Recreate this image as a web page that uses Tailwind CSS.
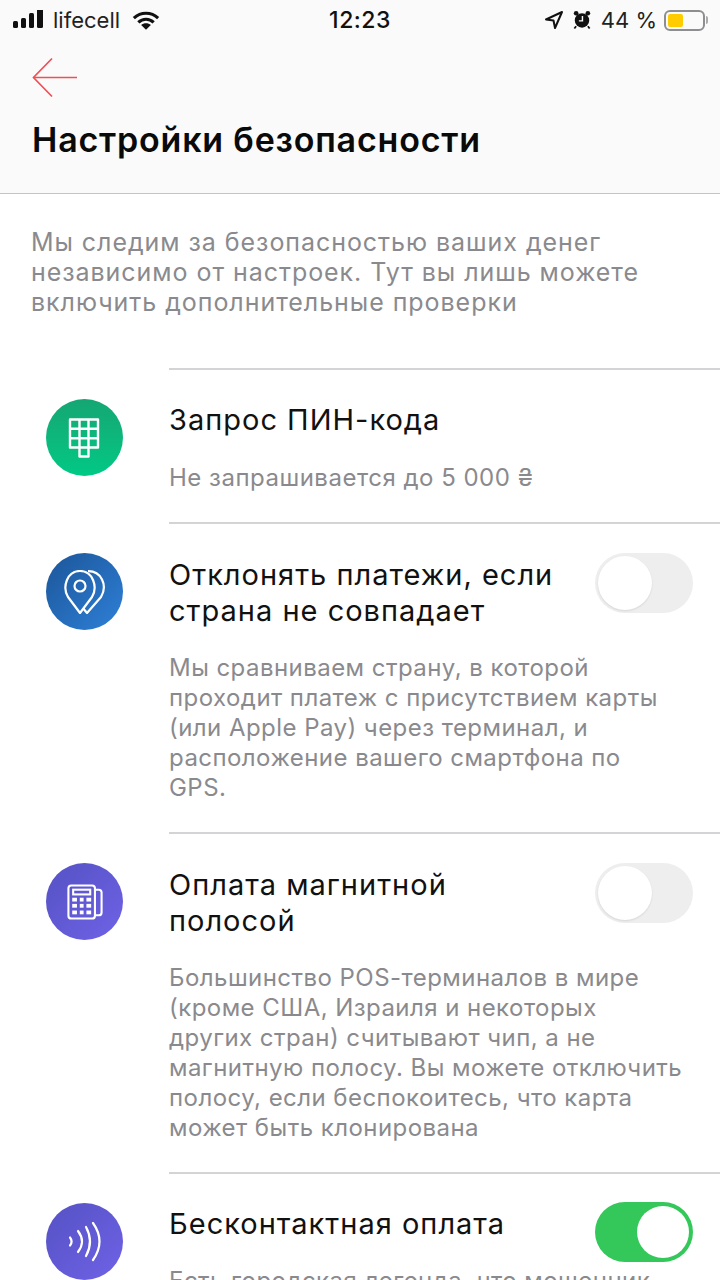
<!DOCTYPE html>
<html lang="ru">
<head>
  <meta charset="UTF-8">
  <title>Настройки безопасности</title>
  <script src="https://cdn.jsdelivr.net/npm/@tailwindcss/browser@4"></script>
</head>
<body class="bg-white">
  <div class="w-[720px] h-[1280px] overflow-hidden font-['Inter','Noto_Sans',sans-serif]">
    <!-- Header -->
    <header class="h-[194px] bg-[#fafafa] border-b border-[#c4c4c6]">
      <div class="h-[40px] flex items-center justify-between pl-[12px] pr-[12px] text-[#111]">
        <div class="flex items-center w-[260px]">
          <svg width="33" height="20" viewBox="0 1 33 20" fill="#111"><rect x="1" y="12" width="5" height="7" rx="1.5"/><rect x="9" y="9" width="5" height="10" rx="1.5"/><rect x="17" y="4" width="5" height="15" rx="1.5"/><rect x="25" y="0" width="6" height="19" rx="1.5"/></svg>
          <span class="text-[22px] ml-[8px] leading-none text-[#222]">lifecell</span>
          <svg class="ml-[12px]" width="28" height="21" viewBox="0 0 30 22" fill="none" stroke="#111" stroke-width="3.4"><path d="M2 8.500C9.500 1.500 20.500 1.500 28 8.500"/><path d="M6.800 13C11.500 8.500 18.500 8.500 23.200 13"/><path fill="#111" stroke="none" d="M15 21l-5.200-5.300C12.500 13.400 17.500 13.400 20.200 15.700z"/></svg>
        </div>
        <span class="text-[23px] font-medium leading-none text-[#111] tracking-[0.5px]">12:23</span>
        <div class="flex items-center justify-end w-[260px]">
          <svg width="20" height="22" viewBox="0 0 20 22" fill="none" stroke="#111" stroke-width="2" stroke-linejoin="round"><path d="M2 10.500L18 3l-7 16-1.500-7.500z"/></svg>
          <svg class="ml-[9px]" width="18" height="20" viewBox="0 0 20 22"><circle cx="10" cy="11.500" r="8" fill="#111"/><circle cx="3.500" cy="3.500" r="2.600" fill="#111"/><circle cx="16.500" cy="3.500" r="2.600" fill="#111"/><path d="M3.500 18l-2 2.500M16.500 18l2 2.500" stroke="#111" stroke-width="2"/><path d="M10.500 6.500V12H6.500" stroke="#fafafa" stroke-width="1.600" fill="none"/></svg>
          <span class="text-[22px] ml-[10px] leading-none text-[#222]">44 %</span>
          <div class="ml-[7px] w-[41px] h-[21px] rounded-[6px] border-2 border-[#8e8e90] p-[2px] flex">
            <div class="w-[15px] bg-[#ffcc00] rounded-[2px]"></div>
          </div>
          <div class="ml-[1px] w-[2px] h-[8px] bg-[#aaa] rounded-r-sm"></div>
        </div>
      </div>
      <div class="pl-[32px] pt-[17px]">
        <svg width="46" height="42" viewBox="0 0 46 42" fill="none" stroke="#ef4f57" stroke-width="1.700"><path d="M45 20.500H2"/><path d="M20 1.500L1.500 20.500 20 39.500"/></svg>
      </div>
      <h1 class="pl-[32px] mt-[19px] text-[34px] leading-[44px] font-semibold text-[#0a0a0a] tracking-[0.8px]">Настройки безопасности</h1>
    </header>

    <!-- Intro -->
    <p class="pl-[31px] pt-[33px] text-[25px] leading-[30px] text-[#8a8a8e] tracking-[0.95px]">Мы следим за безопасностью ваших денег<br>независимо от настроек. Тут вы лишь можете<br>включить дополнительные проверки</p>

    <!-- Rows -->
    <div class="mt-[51px]">
      <div class="flex">
        <div class="w-[169px] shrink-0 pl-[46px] pt-[31px]">
          <div class="w-[77px] h-[77px] rounded-full bg-linear-to-b from-[#14a673] to-[#00c985] flex items-center justify-center">
            <svg class="-ml-[1px]" width="34" height="40" viewBox="0 0 34 40" fill="none" stroke="#fff" stroke-width="2.400" stroke-linejoin="round"><path d="M3 1.500h28v28H3zM12.500 1.500v28M21.500 1.500v28M3 10.800h28M3 20.200h28M12.500 29.500v9h9v-9"/></svg>
          </div>
        </div>
        <div class="flex-1 border-t-2 border-[#d4d4d6] pt-[32px] pb-[29px]">
          <h2 class="text-[29px] leading-[36px] text-[#111] tracking-[1px]">Запрос ПИН-кода</h2>
          <p class="mt-[25px] text-[24px] leading-[30px] text-[#8a8a8e] tracking-[0.5px]">Не запрашивается до 5 000 ₴</p>
        </div>
      </div>

      <div class="flex">
        <div class="w-[169px] shrink-0 pl-[46px] pt-[31px]">
          <div class="w-[77px] h-[77px] rounded-full bg-linear-to-br from-[#1c5699] to-[#2e80d8] flex items-center justify-center">
            <svg width="42" height="44" viewBox="0 0 42 44" fill="none" stroke="#fff" stroke-width="2.200" stroke-linejoin="round"><path d="M16 43L4 27C-2 17 3 1 16 1C29 1 34 17 28 27Z"/><circle cx="16" cy="16" r="5.500"/><path d="M24 1.200C37 1 44 15 37 27L23 43L19.500 38.700"/></svg>
          </div>
        </div>
        <div class="flex-1 border-t-2 border-[#d4d4d6] pt-[33px] pb-[29px] relative">
          <h2 class="text-[29px] leading-[36px] text-[#111] tracking-[1px]">Отклонять платежи, если<br>страна не совпадает</h2>
          <p class="mt-[24px] text-[24px] leading-[30px] text-[#8a8a8e] tracking-[0.45px]">Мы сравниваем страну, в которой<br>проходит платеж с присутствием карты<br>(или Apple Pay) через терминал, и<br>расположение вашего смартфона по<br>GPS.</p>
          <div class="absolute right-[27px] top-[29px] w-[98px] h-[60px] rounded-full bg-[#eeeeee] p-[3px]">
            <div class="w-[54px] h-[54px] rounded-full bg-white shadow-[0_1px_2px_rgba(0,0,0,0.10)]"></div>
          </div>
        </div>
      </div>

      <div class="flex">
        <div class="w-[169px] shrink-0 pl-[46px] pt-[31px]">
          <div class="w-[77px] h-[77px] rounded-full bg-linear-to-br from-[#5552c4] to-[#6f62e6] flex items-center justify-center">
            <svg width="36" height="38" viewBox="0 0 38 38" fill="none" stroke="#fff" stroke-width="2.200"><rect x="1.500" y="1.500" width="28" height="35" rx="3"/><rect x="6.500" y="6" width="18" height="5"/><path d="M29.500 6H33.500Q36.500 6 36.500 9V30Q36.500 33 33.500 33H29.500"/><g fill="#fff" stroke="none"><rect x="5.500" y="14.500" width="5" height="4"/><rect x="13.500" y="14.500" width="4" height="4"/><rect x="20.500" y="14.500" width="5" height="4"/><rect x="5.500" y="21" width="5" height="4"/><rect x="13.500" y="21" width="4" height="4"/><rect x="20.500" y="21" width="5" height="4"/><rect x="5.500" y="28" width="5" height="4"/><rect x="13.500" y="28" width="4" height="4"/><rect x="20.500" y="28" width="5" height="4"/></g></svg>
          </div>
        </div>
        <div class="flex-1 border-t-2 border-[#d4d4d6] pt-[33px] pb-[29px] relative">
          <h2 class="text-[29px] leading-[36px] text-[#111] tracking-[1px]">Оплата магнитной<br>полосой</h2>
          <p class="mt-[24px] text-[24px] leading-[30px] text-[#8a8a8e] tracking-[0.45px]">Большинство POS-терминалов в мире<br>(кроме США, Израиля и некоторых<br>других стран) считывают чип, а не<br>магнитную полосу. Вы можете отключить<br>полосу, если беспокоитесь, что карта<br>может быть клонирована</p>
          <div class="absolute right-[27px] top-[29px] w-[98px] h-[60px] rounded-full bg-[#eeeeee] p-[3px]">
            <div class="w-[54px] h-[54px] rounded-full bg-white shadow-[0_1px_2px_rgba(0,0,0,0.10)]"></div>
          </div>
        </div>
      </div>

      <div class="flex">
        <div class="w-[169px] shrink-0 pl-[46px] pt-[31px]">
          <div class="w-[77px] h-[77px] rounded-full bg-linear-to-br from-[#5552c4] to-[#6f62e6] flex items-center justify-center">
            <svg width="32" height="40" viewBox="0 0 32 40" fill="none" stroke="#fff" stroke-width="2.200" stroke-linecap="round"><path d="M1 15.500c2 2.500 2 5.500 0 8"/><path d="M9 9Q17 19.500 9 30"/><path d="M17 5Q25 19.500 17 34"/><path d="M24 1Q37 19.500 24 38"/></svg>
          </div>
        </div>
        <div class="flex-1 border-t-2 border-[#d4d4d6] pt-[32px] relative">
          <h2 class="text-[29px] leading-[36px] text-[#111] tracking-[1px]">Бесконтактная оплата</h2>
          <p class="mt-[24px] text-[24px] leading-[30px] text-[#8a8a8e] tracking-[0.45px]">Есть городская легенда, что мошенник</p>
          <div class="absolute right-[27px] top-[28px] w-[98px] h-[60px] rounded-full bg-[#34c759] p-[4px] flex justify-end">
            <div class="w-[52px] h-[52px] rounded-full bg-white"></div>
          </div>
        </div>
      </div>
    </div>
  </div>
</body>
</html>
